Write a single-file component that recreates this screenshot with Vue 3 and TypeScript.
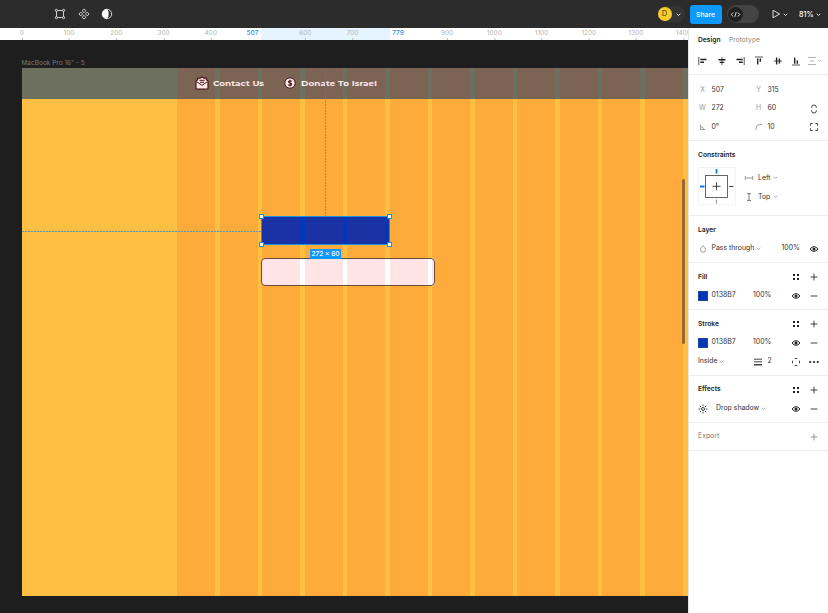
<script setup lang="ts">
interface Tick { label: string; x: number }
interface AlignIcon { axis: string; bars: string }

const ticks: Tick[] = Array.from({ length: 15 }, (_, i) => ({ label: String(i * 100), x: 21.8 + i * 47.25 }))
  .filter(t => t.label !== '500' && t.label !== '800')
const columns = 12

const alignIcons: AlignIcon[] = [
  { axis: 'M.8 1v8', bars: 'M2.3 3.5h6.2M2.3 6.3h3.7' },
  { axis: 'M5 1v8', bars: 'M1.5 3.7h7M2.7 6.4h4.6' },
  { axis: 'M9.2 1v8', bars: 'M1.5 3.5h6.2M4 6.3h3.7' },
  { axis: 'M1 1h8', bars: 'M3.7 2.4v6.1M6.3 2.4v3.4' },
  { axis: 'M.9 5h8.2', bars: 'M3.6 1.4v7.2M6.4 2.6v4.8' },
  { axis: 'M1 9h8', bars: 'M3.7 1.8v6M6.3 4.5v3.3' },
]
const eye = 'M1 5Q5 .3 9 5Q5 9.7 1 5Z'
const plus = 'M5 1.6v6.8M1.6 5h6.8'
const chevron = 'M3 4.2 5 6.1 7 4.2'
</script>

<template>
  <div class="app">
    <header class="topbar">
      <div class="tools">
        <svg viewBox="0 0 12 12"><path d="M3.5 2.5h5M3.5 9.5h5M2.5 3.5v5M9.5 3.5v5" /><circle cx="2.4" cy="2.4" r="1.1" /><circle cx="9.6" cy="2.4" r="1.1" /><circle cx="2.4" cy="9.6" r="1.1" /><circle cx="9.6" cy="9.6" r="1.1" /></svg>
        <svg viewBox="0 0 12 12"><path d="m6 .9 1.9 1.9L6 4.7 4.1 2.8ZM6 7.3l1.9 1.9L6 11.1 4.1 9.2ZM2.8 4.1 4.7 6 2.8 7.9.9 6ZM9.2 4.1 11.1 6 9.2 7.9 7.3 6Z" /></svg>
        <svg viewBox="0 0 12 12"><circle cx="6" cy="6" r="4.7" /><path class="solid" d="M6 1.3a4.7 4.7 0 0 0 0 9.4c1.7-2 1.7-7.4 0-9.4Z" /></svg>
      </div>
      <div class="actions">
        <div class="user"><span class="avatar">D</span><svg viewBox="0 0 10 10"><path :d="chevron" /></svg></div>
        <button class="share">Share</button>
        <div class="toggle"><span><svg viewBox="0 0 12 10"><path d="M3.5 2.7 1.2 5l2.3 2.3M8.5 2.7 10.8 5 8.5 7.3M6.8 2.3 5.2 7.7" /></svg></span></div>
        <svg class="play" viewBox="0 0 10 10"><path d="M2 1.3v7.4L8.7 5Z" /></svg>
        <svg class="chev" viewBox="0 0 10 10"><path :d="chevron" /></svg>
        <span class="zoom">81%</span>
        <svg class="chev" viewBox="0 0 10 10"><path :d="chevron" /></svg>
      </div>
    </header>

    <main class="workspace">
      <section class="editor">
        <div class="ruler">
          <div class="range"></div>
          <span v-for="t in ticks" :key="t.label" class="tick" :style="{ left: t.x + 'px' }">{{ t.label }}</span>
          <span class="mark from">507</span>
          <span class="mark to">779</span>
        </div>
        <div class="canvas">
          <div class="frame-name">MacBook Pro 16" - 5</div>
          <div class="frame">
            <nav class="site-nav">
              <svg class="mail" viewBox="0 0 14 14">
                <path d="M1 5 2.7 3.6V2.2h2.4L7 .8l1.9 1.4h2.4v1.4L13 5v7.2q0 1-1 1H2q-1 0-1-1Z" fill="#fff" stroke="#30191a" stroke-width="1.2" stroke-linejoin="round" />
                <path d="M1.6 5.7 7 9.4l5.4-3.7M4.5 4.3h5M5 6.3h4" fill="none" stroke="#30191a" stroke-width="1" />
              </svg>
              <span class="link contact">Contact Us</span>
              <svg class="coin" viewBox="0 0 12 12">
                <circle cx="6" cy="6" r="5.2" fill="#fff" stroke="#30191a" stroke-width="1" />
                <path d="M7.7 4.4C7 3.4 4.5 3.4 4.5 4.8S7.7 5.9 7.7 7.3 5.1 8.6 4.3 7.6M6 2.7v6.7" fill="none" stroke="#30191a" stroke-width="1.1" />
              </svg>
              <span class="link donate">Donate To Israel</span>
            </nav>
            <div class="input-box"></div>
            <div class="button-box"></div>
            <div class="layout-grid"><i v-for="n in columns" :key="n"></i></div>
          </div>
          <div class="guide-h"></div>
          <div class="guide-v"></div>
          <div class="input-outline"></div>
          <div class="selection"><b class="nw"></b><b class="ne"></b><b class="sw"></b><b class="se"></b></div>
          <div class="size-label">272 × 60</div>
          <div class="scrollbar"></div>
        </div>
      </section>

      <aside class="panel">
        <section class="head">
          <div class="tabs"><strong>Design</strong><span>Prototype</span></div>
          <div class="aligns">
            <svg v-for="icon in alignIcons" :key="icon.axis" class="icon" viewBox="0 0 10 10"><path class="axis" :d="icon.axis" /><path class="bars" :d="icon.bars" /></svg>
            <svg class="more-align" viewBox="0 0 14 10"><path d="M0 1.5h8M2 5h4M0 8.5h8M10 4l1.5 1.5L13 4" /></svg>
          </div>
        </section>

        <section>
          <div class="row dims"><em>X</em><span>507</span><em>Y</em><span>315</span></div>
          <div class="row dims"><em>W</em><span>272</span><em>H</em><span>60</span>
            <svg class="icon" viewBox="0 0 10 10"><path d="M2.7 3.8V3Q2.7 1 5 1T7.3 3v.8M2.7 6.2V7Q2.7 9 5 9T7.3 7v-.8" /></svg></div>
          <div class="row dims"><svg class="icon dim" viewBox="0 0 10 10"><path d="M2.5 2.5v5h5M2.5 4.5q3 0 3 3" /></svg><span>0°</span><svg class="icon dim" viewBox="0 0 10 10"><path d="M2 8V6.5Q2 2.5 6 2.5h2" /></svg><span>10</span>
            <svg class="icon" viewBox="0 0 10 10"><path d="M1.5 3.7V1.5h2.2M6.3 1.5h2.2v2.2M8.5 6.3v2.2H6.3M3.7 8.5H1.5V6.3" /></svg></div>
        </section>

        <section class="constraints">
          <h3 class="row">Constraints</h3>
          <div class="constraint-body">
            <svg class="constraint-map" viewBox="0 0 38 38">
              <rect x=".5" y=".5" width="37" height="37" fill="#fff" stroke="#f3f3f3" />
              <rect x="7.5" y="8.5" width="22" height="22" fill="none" stroke="#555" stroke-width=".9" />
              <path d="M18.5 15.3v8M14.5 19.3h8" fill="none" stroke="#333" stroke-width=".9" />
              <path d="M18.5 2v4.5M2 19.5h4.5" fill="none" stroke="#0d7be5" stroke-width="1.8" />
              <path d="M18.5 32.5v4" fill="none" stroke="#777" stroke-width=".8" /><path d="M31.2 19.5h4.3" stroke="#444" stroke-width="1.1" />
            </svg>
            <div class="constraint-options">
              <div><svg class="icon" viewBox="0 0 10 10"><path d="M1.3 3v4M8.7 3v4M1.3 5h7.4" stroke="#888" /></svg><span>Left</span><svg class="drop" viewBox="0 0 10 10"><path :d="chevron" /></svg></div>
              <div><svg class="icon" viewBox="0 0 10 10"><path d="M3 1.6h4M3 8.4h4M5 1.6v6.8" stroke="#666" /></svg><span>Top</span><svg class="drop" viewBox="0 0 10 10"><path :d="chevron" /></svg></div>
            </div>
          </div>
        </section>

        <section>
          <h3 class="row">Layer</h3>
          <div class="row layer"><svg class="icon dim" viewBox="0 0 10 10"><path d="M5 1.6Q2.5 4 2.5 5.7a2.5 2.5 0 0 0 5 0Q7.5 4 5 1.6Z" /></svg><span>Pass through<svg class="drop" viewBox="0 0 10 10"><path :d="chevron" /></svg></span><span>100%</span><svg class="icon eye" viewBox="0 0 10 10"><path :d="eye" /><circle cx="5" cy="5" r="1.5" /></svg></div>
        </section>

        <section v-for="title in ['Fill', 'Stroke']" :key="title">
          <div class="row title"><h3>{{ title }}</h3><svg class="icon dots" viewBox="0 0 10 10"><path d="M2 2h2v2H2ZM6 2h2v2H6ZM2 6h2v2H2ZM6 6h2v2H6Z" /></svg><svg class="icon" viewBox="0 0 10 10"><path :d="plus" /></svg></div>
          <div class="row paint"><i class="swatch"></i><span>0138B7</span><span>100%</span><svg class="icon eye" viewBox="0 0 10 10"><path :d="eye" /><circle cx="5" cy="5" r="1.5" /></svg><svg class="icon" viewBox="0 0 10 10"><path d="M1.6 5h6.8" /></svg></div>
          <div v-if="title === 'Stroke'" class="row stroke-row"><span>Inside<svg class="drop" viewBox="0 0 10 10"><path :d="chevron" /></svg></span><svg class="icon" viewBox="0 0 10 10"><path d="M1 2.2h8M1 4.8h8" /><path d="M1 7.8h8" stroke-width="1.3" /></svg><span>2</span><svg class="icon" viewBox="0 0 10 10"><path d="M3.7 1.5h2.6M3.7 8.5h2.6M1.5 3.7v2.6M8.5 3.7v2.6" /></svg><svg class="icon ellipsis" viewBox="0 0 10 10"><circle cx="1.2" cy="5" r="1.1" /><circle cx="5" cy="5" r="1.1" /><circle cx="8.8" cy="5" r="1.1" /></svg></div>
        </section>

        <section>
          <div class="row title"><h3>Effects</h3><svg class="icon dots" viewBox="0 0 10 10"><path d="M2 2h2v2H2ZM6 2h2v2H6ZM2 6h2v2H2ZM6 6h2v2H6Z" /></svg><svg class="icon" viewBox="0 0 10 10"><path :d="plus" /></svg></div>
          <div class="row effect"><svg class="icon" viewBox="0 0 10 10"><circle cx="5" cy="5" r="1.5" /><path d="M5 .6v1.6M5 7.8v1.6M.6 5h1.6M7.8 5h1.6M1.9 1.9 3 3M7 7l1.1 1.1M1.9 8.1 3 7M7 3l1.1-1.1" /></svg><span>Drop shadow<svg class="drop" viewBox="0 0 10 10"><path :d="chevron" /></svg></span><svg class="icon eye" viewBox="0 0 10 10"><path :d="eye" /><circle cx="5" cy="5" r="1.5" /></svg><svg class="icon" viewBox="0 0 10 10"><path d="M1.6 5h6.8" /></svg></div>
        </section>

        <section><div class="row title export"><span>Export</span><svg class="icon" viewBox="0 0 10 10"><path :d="plus" /></svg></div></section>
      </aside>
    </main>
  </div>
</template>

<style>
body { margin: 0; overflow: hidden; }
</style>

<style scoped>
* { box-sizing: border-box; }
.app { width: 828px; height: 613px; display: flex; flex-direction: column; overflow: hidden; font-family: Inter, "Liberation Sans", sans-serif; font-size: 6.9px; color: #333; }
svg { display: block; flex: none; fill: none; }

.topbar { height: 28px; flex: none; display: flex; justify-content: space-between; background: #2c2c2c; color: #fff; }
.tools { display: flex; align-items: center; gap: 11.5px; padding-left: 54px; }
.tools svg { width: 12px; height: 12px; stroke: #eee; stroke-width: .85; }
.tools .solid { fill: #fff; }
.actions { display: flex; align-items: center; padding-right: 5px; }
.user { display: flex; align-items: center; width: 27px; height: 16px; margin-right: 5px; border-radius: 8px; background: #353535; }
.avatar { width: 14px; height: 14px; margin-right: 2.5px; border-radius: 50%; background: #f7cd2e; color: #513e00; text-align: center; font-size: 7.5px; line-height: 14px; }
.user svg, .chev { width: 9px; height: 9px; stroke: #ddd; stroke-width: 1.1; }
.share { width: 32px; height: 19px; padding: 0; border: 0; border-radius: 3px; background: #0d99ff; color: #fff; font: 500 6.8px Inter, sans-serif; }
.toggle { width: 32px; height: 18px; margin-left: 5px; border-radius: 9px; background: #444; padding: 1.5px; }
.toggle span { display: flex; width: 15px; height: 15px; border-radius: 50%; background: #202020; align-items: center; justify-content: center; }
.toggle svg { width: 11px; height: 9px; stroke: #fff; stroke-width: .9; }
.play { width: 10px; height: 10px; margin-left: 12.5px; stroke: #eee; stroke-width: .9; }
.zoom { margin-left: 9px; font-size: 7.2px; font-weight: 500; width: 15px; white-space: nowrap; }

.workspace { flex: 1; display: grid; grid-template-columns: 688px 140px; min-height: 0; }
.editor { display: flex; flex-direction: column; overflow: hidden; }
.ruler { position: relative; height: 12px; flex: none; background: #fff; overflow: hidden; font-size: 6.5px; line-height: 8px; }
.range { position: absolute; left: 261px; width: 129px; top: 0; bottom: 0; background: #e5f4ff; }
.tick, .mark { position: absolute; top: .5px; transform: translateX(-50%); color: #b5b5b5; }
.tick::after { content: ""; position: absolute; left: 50%; top: 9.5px; height: 2px; border-left: 1px solid #bbb; }
.mark { color: #2f91e0; font-weight: 500; }
.from { left: 252.5px; }
.to { left: 398px; }

.canvas { position: relative; flex: 1; background: #1e1e1e; overflow: hidden; }
.frame-name { position: absolute; left: 21.5px; top: 19px; color: #777; font-size: 6.5px; line-height: 9px; white-space: nowrap; }
.frame { position: absolute; left: 22px; top: 28px; width: 666px; height: 527.5px; background: #ffbf43; overflow: hidden; }
.site-nav { height: 30.5px; background: #6e705f; display: flex; align-items: center; padding-left: 173px; color: #fff; }
.mail { width: 14px; height: 14px; }
.link { font: 700 7.8px/12px Montserrat, Lato, sans-serif; letter-spacing: .1px; white-space: nowrap; transform-origin: left; margin-top: -1px; }
.contact { width: 51px; margin-left: 4px; transform: scaleX(1.12); }
.coin { width: 12px; height: 12px; margin-left: 20px; }
.donate { margin-left: 5px; transform: scaleX(1.13); }
.layout-grid { position: absolute; top: 0; bottom: 0; left: 155px; display: flex; gap: 4.5px; }
.layout-grid i { width: 38px; background: rgba(255, 0, 0, .1); }
.button-box { position: absolute; left: 239.5px; top: 148.5px; width: 128.5px; height: 28.5px; background: #0138b7; }
.input-box { position: absolute; left: 239.5px; top: 190px; width: 173px; height: 28px; border-radius: 4px; background: #fff; }
.input-outline { position: absolute; left: 261px; top: 218px; width: 174px; height: 28px; border: 1px solid #6b4c3c; border-radius: 4px; }
.guide-h { position: absolute; left: 22px; top: 191px; width: 239px; height: 1px; background: repeating-linear-gradient(90deg, #5d9cb0 0 2px, #d5b060 2px 3px); }
.guide-v { position: absolute; left: 325px; top: 28px; width: 1px; height: 148px; background: linear-gradient(#53719b 30px, transparent 30px), repeating-linear-gradient(#5d9cb0 0 2px, #d5b060 2px 3px); }
.selection { position: absolute; left: 261px; top: 176px; width: 129px; height: 29px; border: 1px solid #1692df; }
.selection b { position: absolute; width: 5px; height: 5px; background: #fff; border: 1px solid #1692df; }
.nw { left: -3px; top: -3px; } .ne { right: -3px; top: -3px; } .sw { left: -3px; bottom: -3px; } .se { right: -3px; bottom: -3px; }
.size-label { position: absolute; left: 310px; top: 209px; width: 31px; height: 10px; border-radius: 1px; background: #0d99ff; color: #fff; font-size: 6.6px; font-weight: 500; line-height: 10.5px; text-align: center; white-space: nowrap; }
.scrollbar { position: absolute; left: 682px; top: 138.5px; width: 3px; height: 165.5px; border-radius: 2px; background: #956b35; }

.panel { background: #fff; border-left: 1px solid #e6e6e6; }
.panel section { border-bottom: 1px solid #efefef; padding: 4.6px 0 3.9px 9px; }
.panel .head { height: 47.4px; padding-top: 5px; padding-bottom: 0; }
.tabs { display: flex; gap: 8.5px; height: 14px; line-height: 14px; font-size: 6.7px; color: #888; }
.tabs strong, h3 { margin: 0; font-size: 6.7px; font-weight: 600; color: #222; }
.aligns { display: flex; align-items: center; height: 27.5px; gap: 8.7px; }
.icon { width: 10px; height: 10px; stroke: #222; stroke-width: .85; justify-self: center; }
.axis { stroke-width: .9; stroke: #444; }
.bars { stroke-width: 1.4; }
.more-align { width: 14px; height: 10px; margin-left: -2px; stroke: #aaa; stroke-width: .9; }
.row { height: 18.75px; display: grid; align-items: center; line-height: 18.75px; white-space: nowrap; }
.dims { grid-template-columns: 9px 47px 9px 45px 11px; padding-top: .6px; }
.dims em { font-style: normal; color: #999; text-align: center; }
.dims span { padding-left: 4.5px; }
.dim { stroke: #888; stroke-width: .8; }
.constraints { height: 75px; }
.constraint-body { display: flex; gap: 8px; padding-top: 4px; }
.constraint-map { width: 38px; height: 38px; margin-top: -1px; }
.constraint-options > div { display: grid; grid-template-columns: 10px auto 10px; column-gap: 4px; justify-content: start; align-items: center; height: 18.7px; }
.drop { width: 9px; height: 9px; stroke: #999; stroke-width: .9; }
.constraint-options .drop { margin-left: -3.5px; }
.row span { display: flex; align-items: center; }
.layer { grid-template-columns: 9px 70px 31px 11px; }
.layer span { padding-left: 4.5px; }
.title { grid-template-columns: 92px 11px 7px 11px; }
.title .icon:last-child { grid-column: 4; }
.dots path { fill: #222; stroke: none; }
.eye { stroke-width: 1; }
.eye circle { fill: #222; stroke: none; }
.paint { grid-template-columns: 9px 46px 37px 11px 7px 11px; }
.paint span { padding-left: 4.5px; }
.paint span + span { padding-left: 0; margin-left: -.5px; }
.paint .icon:last-child { grid-column: 6; }
.paint .swatch + span + span { padding-left: .5px; }
.paint span:nth-child(3) { justify-content: flex-start; }
.swatch { width: 10px; height: 10px; margin-left: -.5px; background: #0138b7; border: .5px solid #164aa5; }
.stroke-row { grid-template-columns: 55px 10px 27px 11px 7px 11px; }
.stroke-row span:nth-child(3) { padding-left: 4.5px; }
.stroke-row .icon:last-child { grid-column: 6; }
.ellipsis circle { fill: #222; stroke: none; }
.effect { grid-template-columns: 9px 83px 11px 7px 11px; }
.effect span { padding-left: 9px; }
.effect .icon:last-child { grid-column: 5; }
.export { color: #777; }
.export .icon { stroke: #888; }
</style>
